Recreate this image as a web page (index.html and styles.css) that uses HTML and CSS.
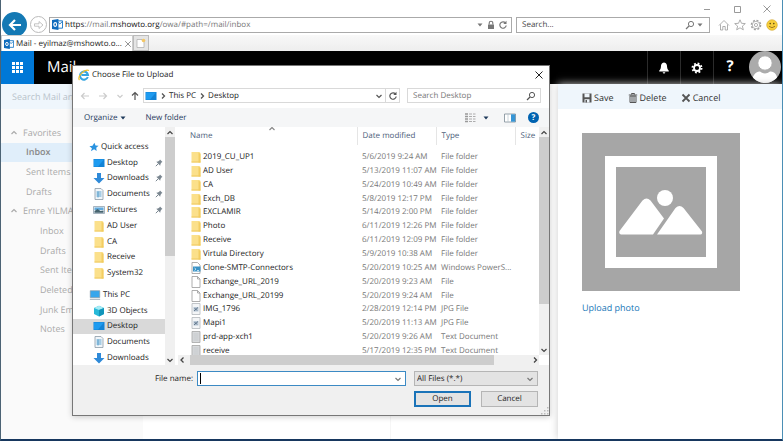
FILE: index.html
```html
<!DOCTYPE html>
<html lang="en">
<head>
<meta charset="utf-8">
<title>Mail - eyilmaz@mshowto.org</title>
<link rel="stylesheet" href="styles.css">
</head>
<body>
<svg class="defs" aria-hidden="true">
  <symbol id="outlook" viewBox="0 0 12 12"><path d="M5 2h6.500v8H5z" fill="#fff" stroke="#1273c4"/><path d="M6 3l2.500 2.500L11 3" fill="none" stroke="#1273c4"/><path d="M0 1.200L7 0v12L0 10.800z" fill="#0f6cbd"/><ellipse cx="3.500" cy="6" rx="1.500" ry="2" fill="none" stroke="#fff" stroke-width="1.200"/></symbol>
  <symbol id="mag" viewBox="0 0 10 10"><circle cx="6" cy="4" r="2.600" fill="none" stroke="currentColor"/><path d="M4 6L1 9" stroke="currentColor" stroke-width="1.300"/></symbol>
  <symbol id="down" viewBox="0 0 8 8"><path d="M1.500 3L4 5.500 6.500 3" fill="none" stroke="currentColor" stroke-width="1.200"/></symbol>
  <symbol id="up" viewBox="0 0 8 8"><path d="M1.500 5L4 2.500 6.500 5" fill="none" stroke="currentColor" stroke-width="1.200"/></symbol>
  <symbol id="left" viewBox="0 0 8 8"><path d="M5.500 1.500L3 4l2.500 2.500" fill="none" stroke="currentColor" stroke-width="1.300"/></symbol>
  <symbol id="right" viewBox="0 0 8 8"><path d="M3 1.500L5.500 4 3 6.500" fill="none" stroke="currentColor" stroke-width="1.300"/></symbol>
  <symbol id="caret" viewBox="0 0 8 8"><path d="M1.500 2.500h5L4 5.500z" fill="currentColor"/></symbol>
  <symbol id="arrow" viewBox="0 0 10 10"><path d="M9 5H1.500M4.500 2l-3 3 3 3" fill="none" stroke="currentColor" stroke-width="1.200"/></symbol>
  <symbol id="cross" viewBox="0 0 10 10"><path d="M1.500 1.500l7 7M8.500 1.500l-7 7" fill="none" stroke="currentColor"/></symbol>
  <symbol id="reload" viewBox="0 0 10 10"><path d="M7.500 3A3.200 3.200 0 1 0 8.200 5.500" fill="none" stroke="currentColor" stroke-width="1.200"/><path d="M8.500.8V4H5.300z" fill="currentColor"/></symbol>
  <symbol id="gear" viewBox="0 0 12 12"><circle cx="6" cy="6" r="4.500" fill="none" stroke="currentColor" stroke-width="2" stroke-dasharray="1.770 1.770"/><circle cx="6" cy="6" r="3" fill="none" stroke="currentColor" stroke-width="1.800"/></symbol>
  <symbol id="folder" viewBox="0 0 10 12"><path d="M.5 1h8l1 1v9.500h-9z" fill="#fbe08b"/><path d="M7.500 1.500l2 1.500v8.500h-2z" fill="#f3cd62"/><path d="M.5 11h9" stroke="#efc95f"/></symbol>
  <symbol id="desk" viewBox="0 0 12 10"><path d="M.5 1h11v8H.5z" fill="#1283d6"/><path d="M1 1.500h10L5 8.500H1z" fill="#1e9bf0"/></symbol>
  <symbol id="downl" viewBox="0 0 12 12"><path d="M4 1h4v5h3.500L6 11.500.5 6H4z" fill="#2f8ad8"/></symbol>
  <symbol id="doc" viewBox="0 0 12 12"><path d="M2 .5h6l2 2v9H2z" fill="#f1f6fa" stroke="#8b9aa6" stroke-width=".8"/><path d="M3.500 4h5M3.500 6h5M3.500 8h5M5 3.500v6" stroke="#4e9ac9" stroke-width=".9"/></symbol>
  <symbol id="pics" viewBox="0 0 12 12"><path d="M.5 2.500h11v7H.5z" fill="#eaf3f9" stroke="#93a2ae" stroke-width=".8"/><path d="M1.500 3.500h9V6h-9z" fill="#62aadc"/><path d="M1.500 8.800V7l3-2 3 2 3-.5v2.300z" fill="#47646f"/></symbol>
  <symbol id="star" viewBox="0 0 12 12"><path d="M6.500.8l1.300 3.400 3.700.3-2.800 2.400.5 3.900-3.100-2.200L2.300 11l1.200-3.600L.5 5l3.700-.4z" fill="#2a93e0"/></symbol>
  <symbol id="pc" viewBox="0 0 14 12"><path d="M1.500 1h11v8h-11z" fill="#36a6ec" stroke="#8397a5" stroke-width=".8"/><path d="M1 11h12" stroke="#8b9ca8"/></symbol>
  <symbol id="cube" viewBox="0 0 12 12"><path d="M6 .8L11 3v6L6 11.500 1 9V3z" fill="#27b9d8"/><path d="M1 3l5 2 5-2L6 .8z" fill="#a8ecf5"/><path d="M6 5l5-2v6l-5 2.500z" fill="#1295ba"/></symbol>
  <symbol id="pin" viewBox="0 0 8 8"><path d="M5 .5L7.500 3l-.8.300L5.500 5l-.3 1.700L1.300 2.800 3 2.500 4.700 1.300z" fill="#7a8690"/><path d="M3.200 4.800L.8 7.200" stroke="#7a8690"/></symbol>
  <symbol id="page" viewBox="0 0 10 12"><path d="M1 .5h5.500L9 3v8.500H1z" fill="#fff" stroke="#9a9a9a" stroke-width=".8"/><path d="M6.500.5V3H9" fill="none" stroke="#9a9a9a" stroke-width=".8"/></symbol>
  <symbol id="ps" viewBox="0 0 10 12"><path d="M1 .5h5.500L9 3v8.500H1z" fill="#fff" stroke="#9a9a9a" stroke-width=".8"/><path d="M2 4.500h7.500v5H2z" fill="#3a93c6"/><path d="M3.500 6l1.500 1.200L3.500 8.500M6 8.500h2" fill="none" stroke="#d9f2ff" stroke-width=".8"/></symbol>
  <symbol id="jpg" viewBox="0 0 10 12"><path d="M1 .5h8v11H1z" fill="#f3f5f7" stroke="#b3b8bd" stroke-width=".8"/><path d="M2.500 4h5v4.500h-5z" fill="#b9c8d6"/><path d="M3 8l4-3.500M3.500 5l2.500 2.500" stroke="#4b6178" stroke-width=".8"/></symbol>
  <symbol id="txt" viewBox="0 0 10 12"><path d="M1 .5h8v11H1z" fill="#d8dadc" stroke="#a4a4a4" stroke-width=".8"/><path d="M2.500 3h5M2.500 5h5M2.500 7h5M2.500 9h5" stroke="#bfc2c5" stroke-width=".7"/></symbol>
</svg>

<div class="window">
  <header class="chrome">
    <div class="caption">
      <button aria-label="Minimize"><svg viewBox="0 0 10 10"><path d="M2 5.500h6" stroke="currentColor"/></svg></button>
      <button aria-label="Maximize"><svg viewBox="0 0 10 10"><path d="M2.500 2.500h6v6h-6z" fill="none" stroke="currentColor"/></svg></button>
      <button aria-label="Close window"><svg viewBox="0 0 10 10"><use href="#cross"/></svg></button>
    </div>
    <div class="navbar">
      <button class="back" aria-label="Back"><svg viewBox="0 0 14 14"><path d="M13 7H2M7 2L2 7l5 5" fill="none" stroke="#fff" stroke-width="2.200"/></svg></button>
      <button class="forward" aria-label="Forward"><svg viewBox="0 0 12 12"><path d="M1.500 4.800h4.500V2.500L10 6 6 9.500V7.200H1.500z" fill="none" stroke="#b5b5b5" stroke-width=".8"/></svg></button>
      <div class="address">
        <svg class="i11"><use href="#outlook"/></svg>
        <span class="url"><b>https</b>://mail.<b>mshowto.org</b>/owa/#path=/mail/inbox</span>
        <svg class="i8"><use href="#caret"/></svg>
        <svg class="i10" viewBox="0 0 10 10"><path d="M2 4.500h6V9H2z" fill="currentColor"/><path d="M3.200 4.500V3a1.800 1.800 0 0 1 3.600 0v1.500" fill="none" stroke="currentColor" stroke-width="1.100"/></svg>
        <svg class="i10"><use href="#reload"/></svg>
      </div>
      <div class="websearch">
        <input type="text" placeholder="Search..." aria-label="Web search">
        <svg class="i10"><use href="#mag"/></svg>
        <svg class="i8"><use href="#caret"/></svg>
      </div>
      <div class="tools">
        <svg class="i12" viewBox="0 0 12 12"><path d="M1 6.500L6 1.500l5 5M2.500 5.500V11h2.300V7.500h2.400V11h2.300V5.500" fill="none" stroke="#9a9a9a" stroke-width=".8"/></svg>
        <svg class="i12" viewBox="0 0 12 12"><path d="M6 .8l1.500 3.500 3.800.3-2.900 2.500.9 3.700L6 8.800l-3.300 2 .9-3.700L.7 4.600l3.800-.3z" fill="none" stroke="#9a9a9a" stroke-width=".8"/></svg>
        <svg class="i12" viewBox="0 0 12 12"><circle cx="6" cy="6" r="4.600" fill="none" stroke="#a0a0a0" stroke-width="1.400" stroke-dasharray="2 1.600"/><circle cx="6" cy="6" r="3.700" fill="none" stroke="#a0a0a0" stroke-width=".7"/><circle cx="6" cy="6" r="1.600" fill="none" stroke="#a0a0a0" stroke-width=".8"/></svg>
        <svg class="i12" viewBox="0 0 12 12"><circle cx="6" cy="6" r="5.300" fill="#f7cf3c" stroke="#d2a52a" stroke-width=".6"/><circle cx="4.200" cy="4.600" r=".8" fill="#5e4a10"/><circle cx="7.800" cy="4.600" r=".8" fill="#5e4a10"/><path d="M3 7.300q3 2.800 6 0" fill="none" stroke="#8a6612" stroke-width=".8"/></svg>
      </div>
    </div>
    <div class="tabs">
      <div class="tab">
        <svg class="i10"><use href="#outlook"/></svg>
        <span>Mail - eyilmaz@mshowto.o...</span>
        <button aria-label="Close tab"><svg class="i8"><use href="#cross"/></svg></button>
      </div>
      <button class="newtab" aria-label="New tab"><svg class="i10" viewBox="0 0 10 10"><path d="M1 1.500h5l2 2v6H1z" fill="#fff" stroke="#aaa" stroke-width=".7"/><circle cx="7.500" cy="2.500" r="1.800" fill="#f4c765"/></svg></button>
    </div>
  </header>

  <div class="suite">
    <button class="launcher" aria-label="App launcher"><svg viewBox="0 0 11 11"><path d="M0 0h3v3H0zM4 0h3v3H4zM8 0h3v3H8zM0 4h3v3H0zM4 4h3v3H4zM8 4h3v3H8zM0 8h3v3H0zM4 8h3v3H4zM8 8h3v3H8z" fill="#fff"/></svg></button>
    <span class="brand">Mail</span>
    <button class="sb" aria-label="Notifications"><svg class="i12" viewBox="0 0 12 12"><path d="M6 .5c2.500.2 3 2 3.100 4.500.1 2 .9 2.700 1.700 3.700v.8H1.200v-.8C2 7.700 2.800 7 2.900 5 3 2.500 3.500.7 6 .5zM4.700 10.200h2.600a1.300 1.300 0 0 1-2.600 0z" fill="#fff"/></svg></button>
    <button class="sb" aria-label="Settings"><svg class="i12"><use href="#gear"/></svg></button>
    <button class="sb help" aria-label="Help">?</button>
    <svg class="avatar" viewBox="0 0 32 32"><clipPath id="round"><circle cx="16" cy="16" r="16"/></clipPath><g clip-path="url(#round)"><path d="M0 0h32v32H0z" fill="#ababab"/><path d="M3 32c0-9 5-12 8-11.500 3 2.500 7 2.500 10 0 4-.5 8 3 8 11.500z" fill="#fff"/><circle cx="16" cy="12" r="7.200" fill="#fff" stroke="#ababab" stroke-width="1"/></g></svg>
  </div>

  <main class="app">
    <nav class="side">
      <div class="mailsearch">Search Mail and People</div>
      <ul class="folders">
        <li class="group"><svg class="i8"><use href="#up"/></svg>Favorites</li>
        <li class="fav current">Inbox</li>
        <li class="fav">Sent Items</li>
        <li class="fav">Drafts</li>
        <li class="group"><svg class="i8"><use href="#up"/></svg>Emre YILMAZ</li>
        <li>Inbox</li>
        <li>Drafts</li>
        <li>Sent Items</li>
        <li>Deleted Items</li>
        <li>Junk Email</li>
        <li>Notes</li>
      </ul>
    </nav>
    <div class="messages"></div>
    <div class="reading"></div>
    <aside class="panel">
      <div class="actions">
        <button><svg class="i10" viewBox="0 0 10 10"><path d="M.5.500h9v9h-9z" fill="#555"/><path d="M2.500.5h5v3.700h-5zM2.500 6.300h5v3.200h-5z" fill="#eff6fc"/><path d="M3.500 7h1.500v2.500H3.500z" fill="#555"/></svg>Save</button>
        <button><svg class="i10" viewBox="0 0 10 10"><path d="M.8 2h8.400M3.500 1.500V.5h3v1" fill="none" stroke="#555"/><path d="M2 3h6v6.500H2z" fill="none" stroke="#555"/><path d="M4 3v6M6 3v6" stroke="#555"/></svg>Delete</button>
        <button><svg class="i10" viewBox="0 0 10 10"><path d="M1.500 1.500l7 7M8.500 1.500l-7 7" stroke="#555" stroke-width="1.800"/></svg>Cancel</button>
      </div>
      <svg class="photo" viewBox="0 0 158 158"><path d="M0 0h158v158H0z" fill="#a6a6a6"/><path d="M23 23h112v112H23z" fill="#fff"/><path d="M34 34h90v90H34z" fill="#a6a6a6"/><circle cx="83" cy="65" r="8" fill="#fff"/><path d="M60.500 67.500q4-4 8 0L82 85.500 71 101.500H39q-2.500-1-1.500-3.500zM93.500 75q4-4 8 0L120 98.500q.8 2.500-1.500 3H75z" fill="#fff"/></svg>
      <a class="upload" href="#">Upload photo</a>
    </aside>
  </main>

  <section class="dialog" role="dialog" aria-label="Choose File to Upload">
    <div class="title">
      <svg class="i12" viewBox="0 0 12 12"><path d="M9.800 8A4 4 0 1 1 10 6H3.500" fill="none" stroke="#35a5e0" stroke-width="2"/><path d="M1.500 11C-1 8 6-.5 11 1.500" fill="none" stroke="#f0c02a" stroke-width="1.200"/></svg>
      <span>Choose File to Upload</span>
      <button aria-label="Close"><svg class="i10"><use href="#cross"/></svg></button>
    </div>
    <div class="pathbar">
      <button class="dim" aria-label="Previous"><svg class="i10"><use href="#arrow"/></svg></button>
      <button class="dim" aria-label="Next"><svg class="i10 flip"><use href="#arrow"/></svg></button>
      <svg class="i8 dim"><use href="#down"/></svg>
      <button class="parent" aria-label="Up one level"><svg class="i10 turn"><use href="#arrow"/></svg></button>
      <div class="path">
        <svg class="i12"><use href="#desk"/></svg>
        <svg class="i8"><use href="#right"/></svg>
        <span>This PC</span>
        <svg class="i8"><use href="#right"/></svg>
        <span class="grow">Desktop</span>
        <svg class="i8"><use href="#down"/></svg>
        <button aria-label="Refresh"><svg class="i10"><use href="#reload"/></svg></button>
      </div>
      <div class="find">
        <input type="text" placeholder="Search Desktop" aria-label="Search Desktop">
        <svg class="i10"><use href="#mag"/></svg>
      </div>
    </div>
    <div class="commands">
      <button>Organize <svg class="i8"><use href="#caret"/></svg></button>
      <button class="newfolder">New folder</button>
      <svg class="i12" viewBox="0 0 12 12"><path d="M1 2h3M1 4.500h3M1 7h3M1 9.500h3" stroke="#999" stroke-width="1.400"/><path d="M5 2h3M5 4.500h3M5 7h3M5 9.500h3M9 2h2.500M9 4.500h2.500M9 7h2.500M9 9.500h2.500" stroke="#999" stroke-width=".8"/></svg>
      <svg class="i8 drop"><use href="#caret"/></svg>
      <svg class="i12 pane" viewBox="0 0 12 12"><path d="M.5 2h11v8H.5z" fill="#fff" stroke="#7b8a96" stroke-width=".8"/><path d="M7 2.300h4.200v7.400H7z" fill="#3795d5"/><path d="M4 2v8" stroke="#b5c3cc" stroke-width=".7"/></svg>
      <button class="info" aria-label="Get help">?</button>
    </div>
    <div class="browse">
      <nav class="tree">
        <ul class="quick">
          <li class="root"><svg class="i10"><use href="#star"/></svg>Quick access</li>
          <li><svg class="i12"><use href="#desk"/></svg>Desktop<svg class="i8 pin"><use href="#pin"/></svg></li>
          <li><svg class="i12"><use href="#downl"/></svg>Downloads<svg class="i8 pin"><use href="#pin"/></svg></li>
          <li><svg class="i12"><use href="#doc"/></svg>Documents<svg class="i8 pin"><use href="#pin"/></svg></li>
          <li><svg class="i12"><use href="#pics"/></svg>Pictures<svg class="i8 pin"><use href="#pin"/></svg></li>
          <li><svg class="i12"><use href="#folder"/></svg>AD User</li>
          <li><svg class="i12"><use href="#folder"/></svg>CA</li>
          <li><svg class="i12"><use href="#folder"/></svg>Receive</li>
          <li><svg class="i12"><use href="#folder"/></svg>System32</li>
        </ul>
        <ul class="thispc">
          <li class="root"><svg class="i12"><use href="#pc"/></svg>This PC</li>
          <li><svg class="i12"><use href="#cube"/></svg>3D Objects</li>
          <li class="picked"><svg class="i12"><use href="#desk"/></svg>Desktop</li>
          <li><svg class="i12"><use href="#doc"/></svg>Documents</li>
          <li><svg class="i12"><use href="#downl"/></svg>Downloads</li>
        </ul>
      </nav>
      <div class="vbar tbar"><svg class="i8"><use href="#up"/></svg><i></i><svg class="i8"><use href="#down"/></svg></div>
      <div class="files">
        <div class="listing">
          <table>
            <thead><tr><th class="name">Name<svg class="i8 sort"><use href="#up"/></svg></th><th class="date">Date modified</th><th class="type">Type</th><th>Size</th></tr></thead>
            <tbody>
              <tr><td><svg class="i12"><use href="#folder"/></svg>2019_CU_UP1</td><td>5/6/2019 9:24 AM</td><td>File folder</td><td></td></tr>
              <tr><td><svg class="i12"><use href="#folder"/></svg>AD User</td><td>5/13/2019 11:07 AM</td><td>File folder</td><td></td></tr>
              <tr><td><svg class="i12"><use href="#folder"/></svg>CA</td><td>5/24/2019 10:49 AM</td><td>File folder</td><td></td></tr>
              <tr><td><svg class="i12"><use href="#folder"/></svg>Exch_DB</td><td>5/8/2019 12:17 PM</td><td>File folder</td><td></td></tr>
              <tr><td><svg class="i12"><use href="#folder"/></svg>EXCLAMIR</td><td>5/14/2019 2:00 PM</td><td>File folder</td><td></td></tr>
              <tr><td><svg class="i12"><use href="#folder"/></svg>Photo</td><td>6/11/2019 12:26 PM</td><td>File folder</td><td></td></tr>
              <tr><td><svg class="i12"><use href="#folder"/></svg>Receive</td><td>6/11/2019 12:09 PM</td><td>File folder</td><td></td></tr>
              <tr><td><svg class="i12"><use href="#folder"/></svg>Virtula Directory</td><td>5/9/2019 10:38 AM</td><td>File folder</td><td></td></tr>
              <tr><td><svg class="i12"><use href="#ps"/></svg>Clone-SMTP-Connectors</td><td>5/20/2019 10:25 AM</td><td>Windows PowerS...</td><td></td></tr>
              <tr><td><svg class="i12"><use href="#page"/></svg>Exchange_URL_2019</td><td>5/20/2019 9:23 AM</td><td>File</td><td></td></tr>
              <tr><td><svg class="i12"><use href="#page"/></svg>Exchange_URL_20199</td><td>5/20/2019 9:24 AM</td><td>File</td><td></td></tr>
              <tr><td><svg class="i12"><use href="#jpg"/></svg>IMG_1796</td><td>2/28/2019 12:14 PM</td><td>JPG File</td><td></td></tr>
              <tr><td><svg class="i12"><use href="#jpg"/></svg>Mapi1</td><td>5/20/2019 11:13 AM</td><td>JPG File</td><td></td></tr>
              <tr><td><svg class="i12"><use href="#txt"/></svg>prd-app-xch1</td><td>5/20/2019 9:26 AM</td><td>Text Document</td><td></td></tr>
              <tr><td><svg class="i12"><use href="#txt"/></svg>receive</td><td>5/17/2019 12:35 PM</td><td>Text Document</td><td></td></tr>
            </tbody>
          </table>
        </div>
        <div class="vbar fbar"><svg class="i8"><use href="#up"/></svg><i></i><svg class="i8"><use href="#down"/></svg></div>
        <div class="hbar"><svg class="i8"><use href="#left"/></svg><i></i><svg class="i8"><use href="#right"/></svg></div>
      </div>
    </div>
    <form class="foot">
      <label for="fname">File name:</label>
      <div class="combo"><input id="fname" type="text"><svg class="i8"><use href="#down"/></svg></div>
      <div class="filter"><select aria-label="File type"><option>All Files (*.*)</option></select><svg class="i8"><use href="#down"/></svg></div>
      <div class="buttons"><button class="open" type="button">Open</button><button type="button">Cancel</button></div>
      <svg class="grip i8" viewBox="0 0 8 8"><path d="M6 0h1.500v1.500H6zM6 3h1.500v1.500H6zM6 6h1.500v1.500H6zM3 3h1.500v1.500H3zM3 6h1.500v1.500H3zM0 6h1.500v1.500H0z" fill="#bbb"/></svg>
    </form>
  </section>
</div>
</body>
</html>
```
FILE: styles.css
```css
* { box-sizing: border-box; }
body { margin: 0; font: 8px/12px "Open Sans", "Noto Sans", sans-serif; color: #222; text-rendering: geometricPrecision; }
button, input, select { font: inherit; color: inherit; border: 0; padding: 0; margin: 0; background: none; text-rendering: inherit; }
button { display: flex; align-items: center; justify-content: center; }
input { outline: 0; min-width: 0; flex: 1; }
ul { list-style: none; margin: 0; padding: 0; }
svg { display: block; flex: none; }
.defs { display: none; }
.i8 { width: 8px; height: 8px; }
.i10 { width: 10px; height: 10px; }
.i11 { width: 11px; height: 11px; }
.i12 { width: 12px; height: 12px; }

.window { position: relative; display: flex; flex-direction: column; height: 100vh; overflow: hidden; background: #fff; border: 1px solid #4c6374; border-top: 0; border-right-color: #4b8fb5; border-bottom: 2px solid #17375e; }

/* Browser chrome */
.chrome { flex: none; color: #777; }
.caption { display: flex; justify-content: flex-end; gap: 20px; height: 14px; padding: 4px 10px 0 0; color: #999; }
.caption svg { width: 10px; height: 10px; }
.navbar { display: flex; align-items: center; height: 21px; padding: 0 4px 0 1px; }
.back { width: 25px; height: 25px; border-radius: 50%; background: #1479b4; }
.back svg { width: 14px; height: 14px; }
.forward { width: 17px; height: 17px; margin: 0 2px 0 3px; border: 1px solid #bbb; border-radius: 50%; }
.forward svg { width: 12px; height: 12px; }
.address, .websearch { display: flex; align-items: center; height: 16px; border: 1px solid #aaa; background: #fff; }
.address { flex: 1; gap: 2px; padding: 0 3px 0 2px; }
.url { flex: 1; }
.url b { font-weight: 400; color: #111; }
.websearch { width: 194px; margin: 0 8px 0 4px; padding: 0 5px 0 5px; gap: 1px; }
.websearch input::placeholder { color: #444; opacity: 1; }
.tools { display: flex; gap: 4px; }
.tabs { display: flex; height: 16px; background: linear-gradient(#f8f8f8, #eee); }
.tab { display: flex; align-items: center; gap: 2px; width: 132px; padding: 0 2px; border: 1px solid #ccc; border-bottom: 0; background: #fff; color: #222; }
.tab span { white-space: nowrap; }
.tab button { margin-left: auto; color: #777; }
.newtab { width: 16px; border: 1px solid #bbb; background: #e5e5e5; }

/* Suite header */
.suite { display: flex; flex: none; align-items: stretch; height: 33px; background: #000; color: #fff; }
.launcher { width: 33px; background: #0078d7; }
.launcher svg { width: 11px; height: 11px; }
.brand { flex: 1; padding-left: 13px; font-size: 15px; line-height: 33px; }
.sb { width: 33px; border-left: 1px solid #2b2b2b; }
.help { font-size: 15px; font-weight: 700; line-height: 30px; align-items: flex-start; }
.avatar { width: 32px; height: 32px; margin: 0 1px 0 3px; }

/* Mail */
.app { display: flex; flex: 1; min-height: 0; }
.side { width: 142px; background: #fafafa; color: #aaa; font-size: 9px; }
.mailsearch { height: 25px; padding-left: 11px; line-height: 26px; background: #eff6fc; color: #b9c3cb; }
.folders { display: grid; grid-auto-rows: 1fr; height: 216px; margin-top: 14px; }
.folders li { display: flex; align-items: center; padding-left: 39px; }
.folders .group { gap: 5px; padding-left: 9px; }
.folders .fav { padding-left: 25px; }
.folders .current { background: #e0eefa; color: #888; font-weight: 600; }
.messages { width: 248px; border-right: 1px solid #f6f6f6; }
.reading { flex: 1; }
.panel { width: 224px; box-shadow: 0 0 8px #ccc; background: #fff; }
.actions { display: flex; gap: 14px; height: 25px; padding: 4px 0 0 24px; background: #eff6fc; color: #333; font-size: 9px; }
.actions button { gap: 2px; height: 20px; }
.photo { width: 158px; height: 158px; margin: 24px 0 0 24px; }
.upload { display: block; margin: 11px 0 0 24px; color: #1a78b8; font-size: 9px; text-decoration: none; }

/* File dialog */
.dialog { position: absolute; top: 65px; left: 71px; width: 478px; border: 1px solid #777; background: #fff; box-shadow: 0 1px 6px #0003; }
.title { display: flex; align-items: center; gap: 2px; height: 17px; padding: 0 5px; }
.title span { flex: 1; }
.pathbar { display: flex; align-items: center; height: 25px; padding: 0 8px 0 7px; color: #555; }
.pathbar > button { margin-right: 8px; }
.pathbar > svg { margin-right: 6px; }
.pathbar > .parent { margin-right: 3px; }
.pathbar .dim { color: #ccc; }
.flip { transform: scaleX(-1); }
.turn { transform: rotate(90deg); }
.path, .find { display: flex; align-items: center; height: 15px; border: 1px solid #d9d9d9; }
.path { flex: 1; gap: 2px; padding-left: 1px; }
.path span { color: #222; }
.path .grow { flex: 1; }
.path button { width: 14px; height: 13px; border-left: 1px solid #d9d9d9; }
.find { width: 134px; margin-left: 7px; padding: 0 4px 0 5px; }
.find input::placeholder { color: #777; opacity: 1; }
.commands { display: flex; align-items: center; height: 19px; padding: 0 10px 0 11px; background: #f5f6f7; color: #1e395b; }
.commands button { gap: 2px; }
.newfolder { margin-right: auto; margin-left: 18px; }
.drop { margin: 0 14px 0 6px; }
.pane { margin-right: 12px; }
.commands .info { width: 11px; height: 11px; border-radius: 50%; background: #0063b1; color: #fff; font-weight: 700; }
.browse { display: flex; height: 238px; }
.tree { display: flex; flex-direction: column; gap: 6px; width: 92px; padding-top: 12px; overflow: hidden; }
.tree ul { display: grid; flex: none; grid-auto-rows: 1fr; }
.quick { height: 142px; }
.thispc { height: 79px; }
.tree li { display: flex; align-items: center; gap: 2px; padding: 0 2px 0 20px; white-space: nowrap; }
.tree .root { padding-left: 16px; }
.tree .pin { margin-left: auto; }
.tree .picked { background: #d9d9d9; }
.vbar { display: flex; flex-direction: column; align-items: center; justify-content: space-between; width: 10px; padding: 2px 0 1px; background: #f0f0f0; color: #444; }
.vbar i { width: 10px; background: #cdcdcd; }
.tbar i { height: 119px; margin-bottom: auto; }
.fbar i { height: 167px; margin-bottom: auto; }
.files { display: grid; flex: 1; grid-template: 1fr 10px / 1fr 10px; margin-left: 3px; min-width: 0; }
.listing { min-height: 0; overflow: hidden; }
table { width: 100%; height: 231px; border-collapse: collapse; table-layout: fixed; }
th, td { padding: 0 0 0 5px; text-align: left; white-space: nowrap; font-weight: 400; color: #777; }
th { position: relative; height: 18px; border-right: 1px solid #e5e5e5; color: #4c607a; }
th:last-child { border-right: 0; }
thead::after { display: block; height: 5px; content: ""; }
.name { width: 179px; }
.date, .type { width: 79px; }
.sort { position: absolute; top: -2px; left: 90px; color: #888; }
.name, td:first-child { padding-left: 12px; }
td:first-child { color: #222; }
td svg { display: inline-block; margin-right: 1px; vertical-align: top; }
.hbar { display: flex; align-items: center; background: #f0f0f0; color: #444; }
.hbar i { width: 304px; height: 10px; margin: 0 auto 0 4px; background: #cdcdcd; }
.foot { position: relative; display: grid; grid-template-columns: 121px 1fr 124px; align-content: start; gap: 5px 8px; height: 50px; padding: 6px 11px 0 0; background: #f0f0f0; }
.foot label { text-align: right; padding-right: 1px; line-height: 15px; }
.combo, .filter { display: flex; align-items: center; height: 15px; padding: 0 3px 0 2px; border: 1px solid #3c8ac4; background: #fff; color: #777; }
.combo { margin-left: -5px; }
.combo input { height: 11px; background: linear-gradient(#000, #000) 0 0 / 1px 11px no-repeat; }
.filter { border-color: #b5b5b5; background: #e3e3e3; }
.filter select { flex: 1; appearance: none; outline: 0; color: #222; }
.buttons { grid-column: 3; display: grid; grid-template-columns: 1fr 1fr; gap: 10px; }
.buttons button { height: 16px; border: 1px solid #b5b5b5; background: #e3e3e3; }
.buttons .open { border: 2px solid #1a73b8; }
.grip { position: absolute; right: 0; bottom: 0; }
```
